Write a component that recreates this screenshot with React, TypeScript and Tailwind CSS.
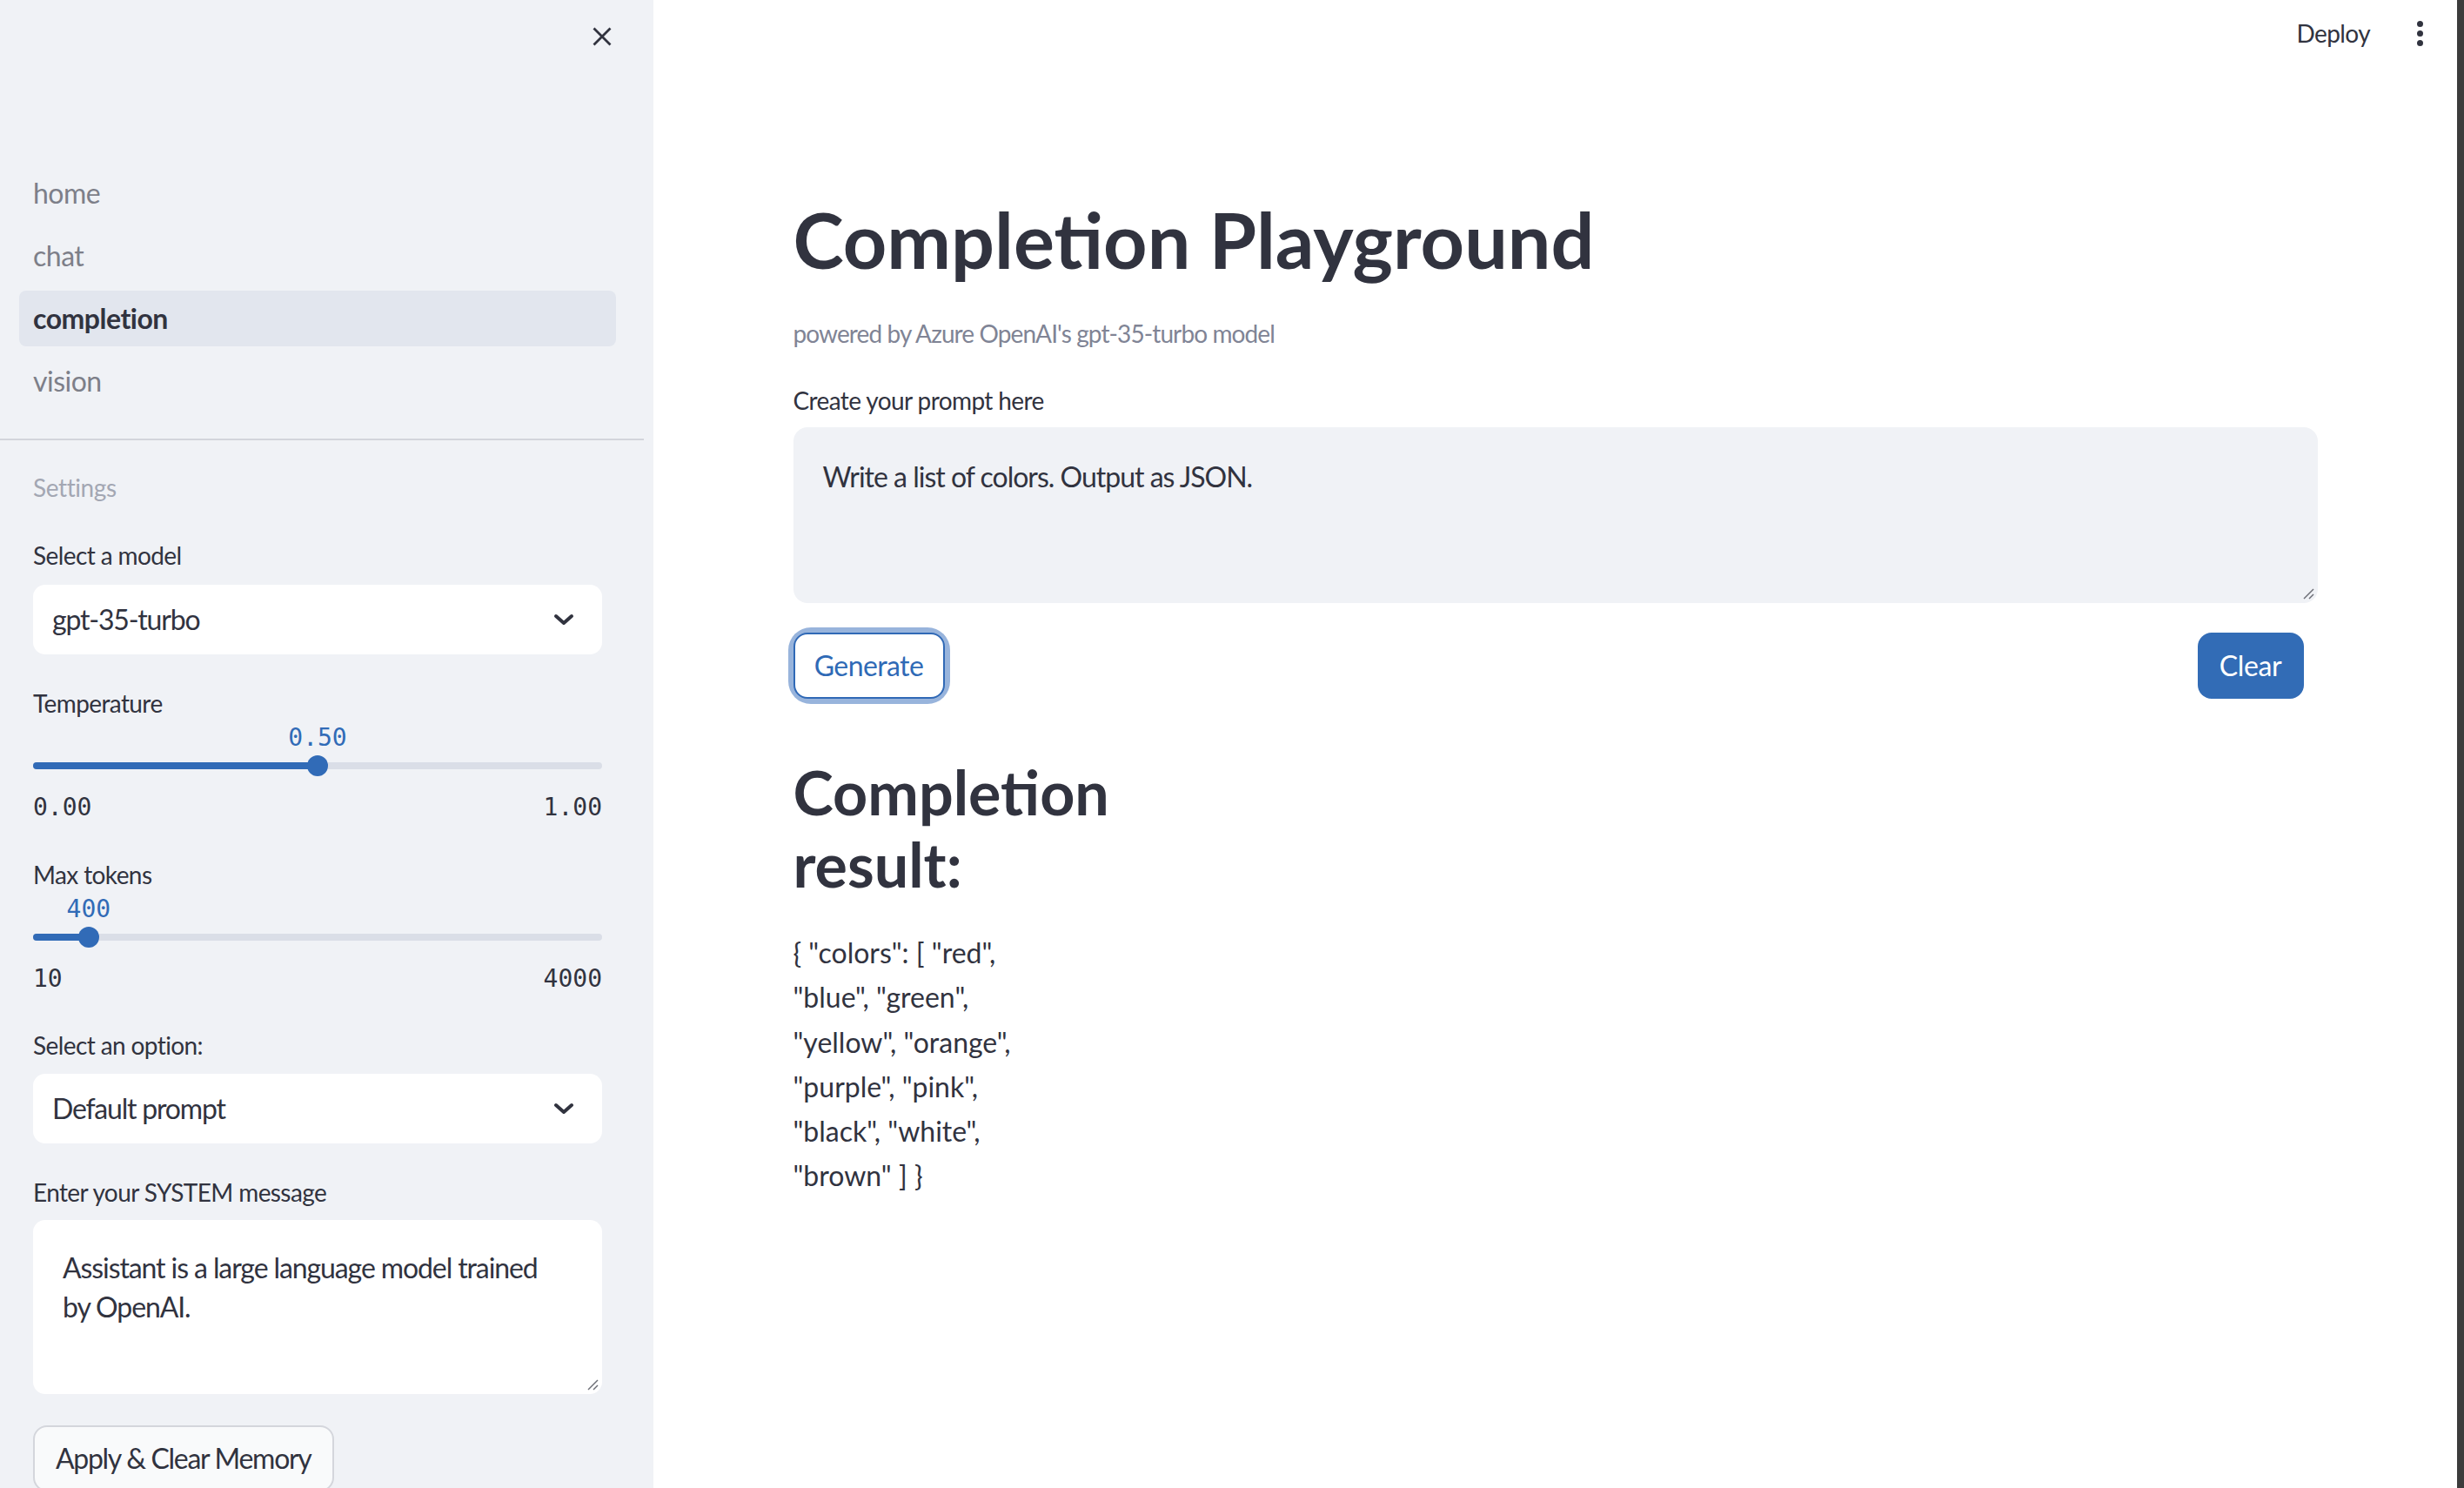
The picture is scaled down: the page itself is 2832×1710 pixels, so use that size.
import React from "react";

const FONT = "font-['Lato','Noto_Sans',sans-serif]";
const MONO = "font-['DejaVu_Sans_Mono','Liberation_Mono',monospace]";

function ResizeHandle() {
  return (
    <svg
      className="absolute right-[4px] bottom-[4px]"
      width="14"
      height="14"
      viewBox="0 0 14 14"
    >
      <line x1="2" y1="13" x2="13" y2="2" stroke="#6b6d75" strokeWidth="1.4" />
      <line x1="8" y1="13" x2="13" y2="8" stroke="#6b6d75" strokeWidth="1.4" />
    </svg>
  );
}

function Chevron() {
  return (
    <svg width="24" height="16" viewBox="0 0 24 16" fill="none">
      <path
        d="M3 4 L12 12 L21 4"
        stroke="#31333f"
        strokeWidth="4"
        strokeLinecap="round"
        strokeLinejoin="round"
      />
    </svg>
  );
}

function Select({ value }: { value: string }) {
  return (
    <div className="h-[80px] w-full bg-white rounded-[14px] flex items-center justify-between pl-[22px] pr-[32px]">
      <span className="text-[32px] leading-none tracking-[-1.2px] text-[#31333f]">
        {value}
      </span>
      <Chevron />
    </div>
  );
}

function Slider({
  value,
  pct,
  min,
  max,
}: {
  value: string;
  pct: number;
  min: string;
  max: string;
}) {
  return (
    <div className="w-full shrink-0">
      <div className="relative h-[40px]">
        <span
          className={`absolute top-0 -translate-x-1/2 text-[28px] leading-[40px] text-[#316bb7] ${MONO}`}
          style={{ left: `${pct}%` }}
        >
          {value}
        </span>
      </div>
      <div className="relative h-[24px] flex items-center">
        <div className="w-full h-[8px] rounded-full bg-[#dadee7]" />
        <div
          className="absolute left-0 h-[8px] rounded-full bg-[#316bb7]"
          style={{ width: `${pct}%` }}
        />
        <div
          className="absolute w-[24px] h-[24px] rounded-full bg-[#316bb7] -translate-x-1/2"
          style={{ left: `${pct}%` }}
        />
      </div>
      <div
        className={`mt-[16px] flex justify-between text-[28px] leading-[40px] text-[#31333f] ${MONO}`}
      >
        <span>{min}</span>
        <span>{max}</span>
      </div>
    </div>
  );
}

function Label({ children }: { children: React.ReactNode }) {
  return (
    <div className="text-[28px] leading-[40px] tracking-[-0.6px] text-[#31333f]">
      {children}
    </div>
  );
}

export default function App() {
  const navItems = ["home", "chat", "completion", "vision"];
  return (
    <div
      className={`flex w-[2832px] h-[1710px] overflow-hidden bg-white ${FONT}`}
    >
      {/* Sidebar */}
      <aside className="w-[751px] shrink-0 bg-[#f0f2f6] overflow-hidden">
        <div className="h-[84px] flex justify-end pt-[31px] pr-[48px]">
          <svg width="22" height="22" viewBox="0 0 22 22">
            <path
              d="M1.5 1.5 L20.5 20.5 M20.5 1.5 L1.5 20.5"
              stroke="#31333f"
              strokeWidth="2.8"
            />
          </svg>
        </div>
        <nav className="mt-[106px] px-[22px] pr-[43px] flex flex-col gap-[8px]">
          {navItems.map((n) => (
            <div
              key={n}
              className={`h-[64px] rounded-[8px] pl-[16px] flex items-center text-[32px] tracking-[-0.5px] ${
                n === "completion"
                  ? "bg-[#e2e6ee] font-bold text-[#31333f]"
                  : "text-[#7d7f89]"
              }`}
            >
              {n}
            </div>
          ))}
        </nav>
        <div className="mt-[34px] h-[2px] w-[740px] bg-[#d3d5db]" />
        <div className="px-[38px] w-[730px] flex flex-col">
          <div className="mt-[34px] text-[28px] leading-[40px] tracking-[-0.4px] text-[#a3a7b3]">
            Settings
          </div>
          <div className="mt-[38px]">
            <Label>Select a model</Label>
          </div>
          <div className="mt-[14px] shrink-0">
            <Select value="gpt-35-turbo" />
          </div>
          <div className="mt-[36px]">
            <Label>Temperature</Label>
          </div>
          <Slider value="0.50" pct={50} min="0.00" max="1.00" />
          <div className="mt-[37px]">
            <Label>Max tokens</Label>
          </div>
          <Slider value="400" pct={9.77} min="10" max="4000" />
          <div className="mt-[36px]">
            <Label>Select an option:</Label>
          </div>
          <div className="mt-[13px] shrink-0">
            <Select value="Default prompt" />
          </div>
          <div className="mt-[36px]">
            <Label>Enter your SYSTEM message</Label>
          </div>
          <div className="mt-[12px] shrink-0 relative h-[200px] bg-white rounded-[14px] px-[34px] pt-[32px] text-[32px] leading-[45px] tracking-[-1.1px] text-[#31333f] whitespace-nowrap">
            Assistant is a large language model trained
            <br />
            by OpenAI.
            <ResizeHandle />
          </div>
          <div className="mt-[36px] shrink-0">
            <div className="inline-flex h-[76px] items-center px-[24px] rounded-[16px] border-2 border-[#d4d6dc] bg-[#f9fafb] text-[32px] tracking-[-1.3px] text-[#31333f] whitespace-nowrap">
              Apply &amp; Clear Memory
            </div>
          </div>
        </div>
      </aside>

      {/* Main */}
      <main className="flex-1 relative flex flex-col">
        <header className="absolute top-0 right-0 h-[76px] flex items-center gap-[54px] pr-[39px]">
          <span className="text-[28px] tracking-[-0.6px] text-[#31333f]">
            Deploy
          </span>
          <div className="flex flex-col gap-[4px] items-center">
            <div className="w-[7px] h-[7px] rounded-full bg-[#31333f]" />
            <div className="w-[7px] h-[7px] rounded-full bg-[#31333f]" />
            <div className="w-[7px] h-[7px] rounded-full bg-[#31333f]" />
          </div>
        </header>

        <div className="w-[1752px] mx-auto flex flex-col pt-[222px]">
          <h1 className="text-[88px] leading-[106px] font-bold text-[#31333f] whitespace-nowrap">
            Completion Playground
          </h1>
          <p className="mt-[35px] text-[28px] leading-[40px] tracking-[-0.9px] text-[#808495]">
            powered by Azure OpenAI's gpt-35-turbo model
          </p>
          <div className="mt-[37px]">
            <Label>Create your prompt here</Label>
          </div>
          <div className="mt-[11px] relative h-[202px] bg-[#f0f2f6] rounded-[16px] px-[34px] pt-[34px] text-[32px] leading-[45px] tracking-[-1px] text-[#31333f]">
            Write a list of colors. Output as JSON.
            <ResizeHandle />
          </div>
          <div className="mt-[34px] flex justify-between items-center pr-[16px]">
            <div className="rounded-[20px] ring-[6px] ring-[#98b4dc]">
              <div className="h-[76px] w-[174px] flex items-center justify-center rounded-[16px] border-2 border-[#3069b6] bg-white text-[32px] tracking-[-0.6px] text-[#2f6ab6]">
                Generate
              </div>
            </div>
            <div className="h-[76px] w-[122px] flex items-center justify-center rounded-[16px] bg-[#326cb6] text-[32px] tracking-[-0.4px] text-white">
              Clear
            </div>
          </div>
          <h2 className="mt-[66px] text-[70px] leading-[83px] font-bold text-[#31333f] whitespace-nowrap">
            Completion
            <br />
            result:
          </h2>
          <div className="mt-[34px] text-[32px] leading-[51.3px] text-[#31333f] whitespace-nowrap">
            {'{ "colors": [ "red",'}
            <br />
            {'"blue", "green",'}
            <br />
            {'"yellow", "orange",'}
            <br />
            {'"purple", "pink",'}
            <br />
            {'"black", "white",'}
            <br />
            {'"brown" ] }'}
          </div>
        </div>
      </main>

      {/* scrollbar strip */}
      <div className="w-[8px] shrink-0 bg-[#3c3c3c]" />
    </div>
  );
}
